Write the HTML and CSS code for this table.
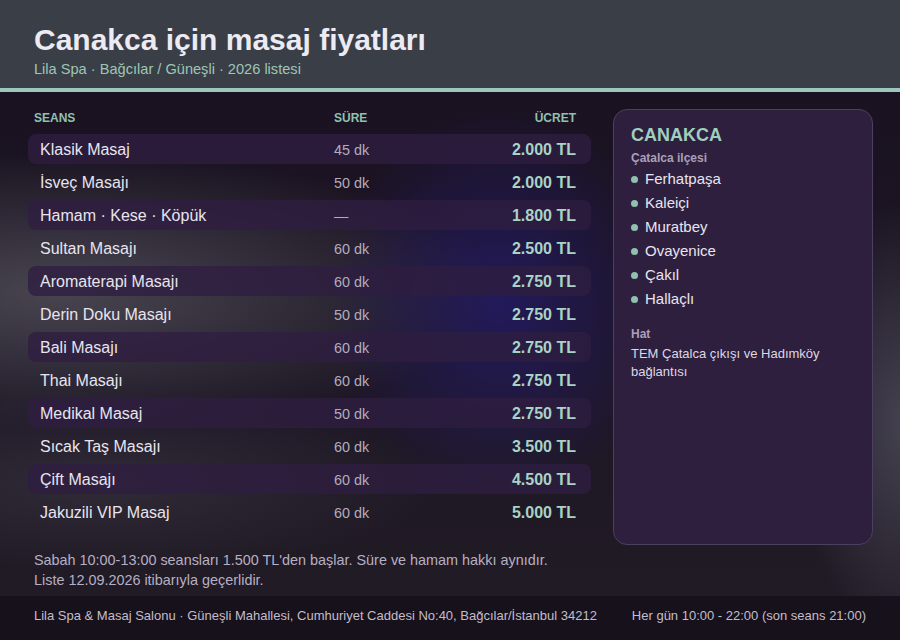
FILE: index.html
```html
<!DOCTYPE html>
<html lang="tr">
<head>
<meta charset="utf-8">
<title>Canakca için masaj fiyatları</title>
<link rel="stylesheet" href="styles.css">
</head>
<body>
<div class="page">
  <header class="top">
    <h1 class="title">Canakca için masaj fiyatları</h1>
    <p class="subtitle">Lila Spa · Bağcılar / Güneşli · 2026 listesi</p>
  </header>
  <div class="body">
    <main class="main">
      <section class="prices">
        <div class="head">
          <span>SEANS</span><span>SÜRE</span><span class="right">ÜCRET</span>
        </div>
        <div class="rows">
          <div class="row alt"><span class="name">Klasik Masaj</span><span class="dur">45 dk</span><span class="price">2.000 TL</span></div>
          <div class="row"><span class="name">İsveç Masajı</span><span class="dur">50 dk</span><span class="price">2.000 TL</span></div>
          <div class="row alt"><span class="name">Hamam · Kese · Köpük</span><span class="dur">—</span><span class="price">1.800 TL</span></div>
          <div class="row"><span class="name">Sultan Masajı</span><span class="dur">60 dk</span><span class="price">2.500 TL</span></div>
          <div class="row alt"><span class="name">Aromaterapi Masajı</span><span class="dur">60 dk</span><span class="price">2.750 TL</span></div>
          <div class="row"><span class="name">Derin Doku Masajı</span><span class="dur">50 dk</span><span class="price">2.750 TL</span></div>
          <div class="row alt"><span class="name">Bali Masajı</span><span class="dur">60 dk</span><span class="price">2.750 TL</span></div>
          <div class="row"><span class="name">Thai Masajı</span><span class="dur">60 dk</span><span class="price">2.750 TL</span></div>
          <div class="row alt"><span class="name">Medikal Masaj</span><span class="dur">50 dk</span><span class="price">2.750 TL</span></div>
          <div class="row"><span class="name">Sıcak Taş Masajı</span><span class="dur">60 dk</span><span class="price">3.500 TL</span></div>
          <div class="row alt"><span class="name">Çift Masajı</span><span class="dur">60 dk</span><span class="price">4.500 TL</span></div>
          <div class="row"><span class="name">Jakuzili VIP Masaj</span><span class="dur">60 dk</span><span class="price">5.000 TL</span></div>
        </div>
      </section>
      <aside class="side">
        <h2 class="side-title">CANAKCA</h2>
        <div class="side-label">Çatalca ilçesi</div>
        <ul class="hoods">
          <li>Ferhatpaşa</li>
          <li>Kaleiçi</li>
          <li>Muratbey</li>
          <li>Ovayenice</li>
          <li>Çakıl</li>
          <li>Hallaçlı</li>
        </ul>
        <div class="side-label hat">Hat</div>
        <p class="side-text">TEM Çatalca çıkışı ve Hadımköy bağlantısı</p>
      </aside>
    </main>
    <div class="note">
      <p>Sabah 10:00-13:00 seansları 1.500 TL'den başlar. Süre ve hamam hakkı aynıdır.</p>
      <p>Liste 12.09.2026 itibarıyla geçerlidir.</p>
    </div>
  </div>
  <footer class="foot">
    <span>Lila Spa &amp; Masaj Salonu · Güneşli Mahallesi, Cumhuriyet Caddesi No:40, Bağcılar/İstanbul 34212</span>
    <span>Her gün 10:00 - 22:00 (son seans 21:00)</span>
  </footer>
</div>
</body>
</html>
```

FILE: styles.css
```css
* { box-sizing: border-box; }
html, body { margin: 0; padding: 0; }
body {
  font-family: "Liberation Sans", Arial, sans-serif;
  background: #17111b;
  color: #e8e4ee;
}
.page {
  width: 900px;
  height: 640px;
  display: flex;
  flex-direction: column;
  overflow: hidden;
}
.top {
  height: 92px;
  background: #3a3e46;
  border-bottom: 4px solid #9cc8bc;
  padding: 21px 34px 0;
}
.title {
  margin: 0;
  font-size: 30px;
  line-height: 38px;
  font-weight: 700;
  color: #eceaf2;
}
.subtitle {
  margin: 1px 0 0;
  font-size: 14.6px;
  line-height: 18px;
  color: #9ec6b7;
}
.body {
  flex: 1;
  display: flex;
  flex-direction: column;
  background:
    radial-gradient(ellipse 170px 200px at 500px 210px, rgba(38,28,125,0.62), rgba(38,28,125,0) 100%),
    radial-gradient(ellipse 440px 140px at 60px 200px, rgba(100,100,110,0.6), rgba(100,100,110,0) 100%),
    radial-gradient(ellipse 340px 90px at 100px 390px, rgba(80,76,90,0.35), rgba(80,76,90,0) 100%),
    radial-gradient(ellipse 110px 220px at 905px 330px, rgba(95,95,110,0.6), rgba(95,95,110,0) 100%),
    linear-gradient(180deg, #1a1220 0%, #1e1725 60%, #211b25 100%);
}
.main {
  flex: 1;
  display: grid;
  grid-template-columns: 563px 260px;
  column-gap: 22px;
  padding: 17px 0 0 28px;
}
.head {
  display: grid;
  grid-template-columns: 300px 1fr auto;
  height: 18px;
  line-height: 18px;
  padding: 0 15px 0 6px;
  margin-bottom: 7px;
  font-size: 12px;
  font-weight: 700;
  color: #8fc1b0;
}
.right { text-align: right; }
.rows {
  display: flex;
  flex-direction: column;
  gap: 3px;
}
.row {
  display: grid;
  grid-template-columns: 294px 1fr auto;
  align-items: center;
  height: 30px;
  padding: 1px 15px 0 12px;
  border-radius: 8px;
}
.row.alt { background: rgba(46, 30, 64, 0.78); }
.name { font-size: 16px; color: #e8e4ee; }
.dur { font-size: 14.4px; color: #b3acbd; }
.price { font-size: 16px; font-weight: 700; color: #a9d3c5; text-align: right; }
.side {
  background: #2e1f3e;
  border: 1px solid #4c3f5f;
  border-radius: 14px;
  padding: 14px 17px;
}
.side-title {
  margin: 0;
  font-size: 18px;
  line-height: 22px;
  font-weight: 700;
  color: #9fcfbf;
}
.side-label {
  margin-top: 4px;
  font-size: 12px;
  line-height: 16px;
  font-weight: 700;
  color: #ab9fb8;
}
.side-label.hat { margin-top: 16px; }
.hoods {
  list-style: none;
  margin: 0;
  padding: 0;
}
.hoods li {
  display: flex;
  align-items: center;
  gap: 7px;
  height: 24px;
  font-size: 15px;
  color: #e8e4ee;
}
.hoods li::before {
  content: "";
  width: 7px;
  height: 7px;
  border-radius: 50%;
  background: #8fc1b0;
  margin-top: 2px;
}
.side-text {
  margin: 3px 0 0;
  font-size: 13px;
  line-height: 18px;
  color: #ddd8e4;
}
.note {
  padding: 5px 34px 6px;
  font-size: 14.4px;
  line-height: 20px;
  color: #b7afc3;
}
.note p { margin: 0; }
.foot {
  height: 44px;
  display: flex;
  justify-content: space-between;
  align-items: center;
  padding: 0 34px 6px;
  background: #17111b;
  font-size: 13px;
  color: #c3bdcb;
}
```
